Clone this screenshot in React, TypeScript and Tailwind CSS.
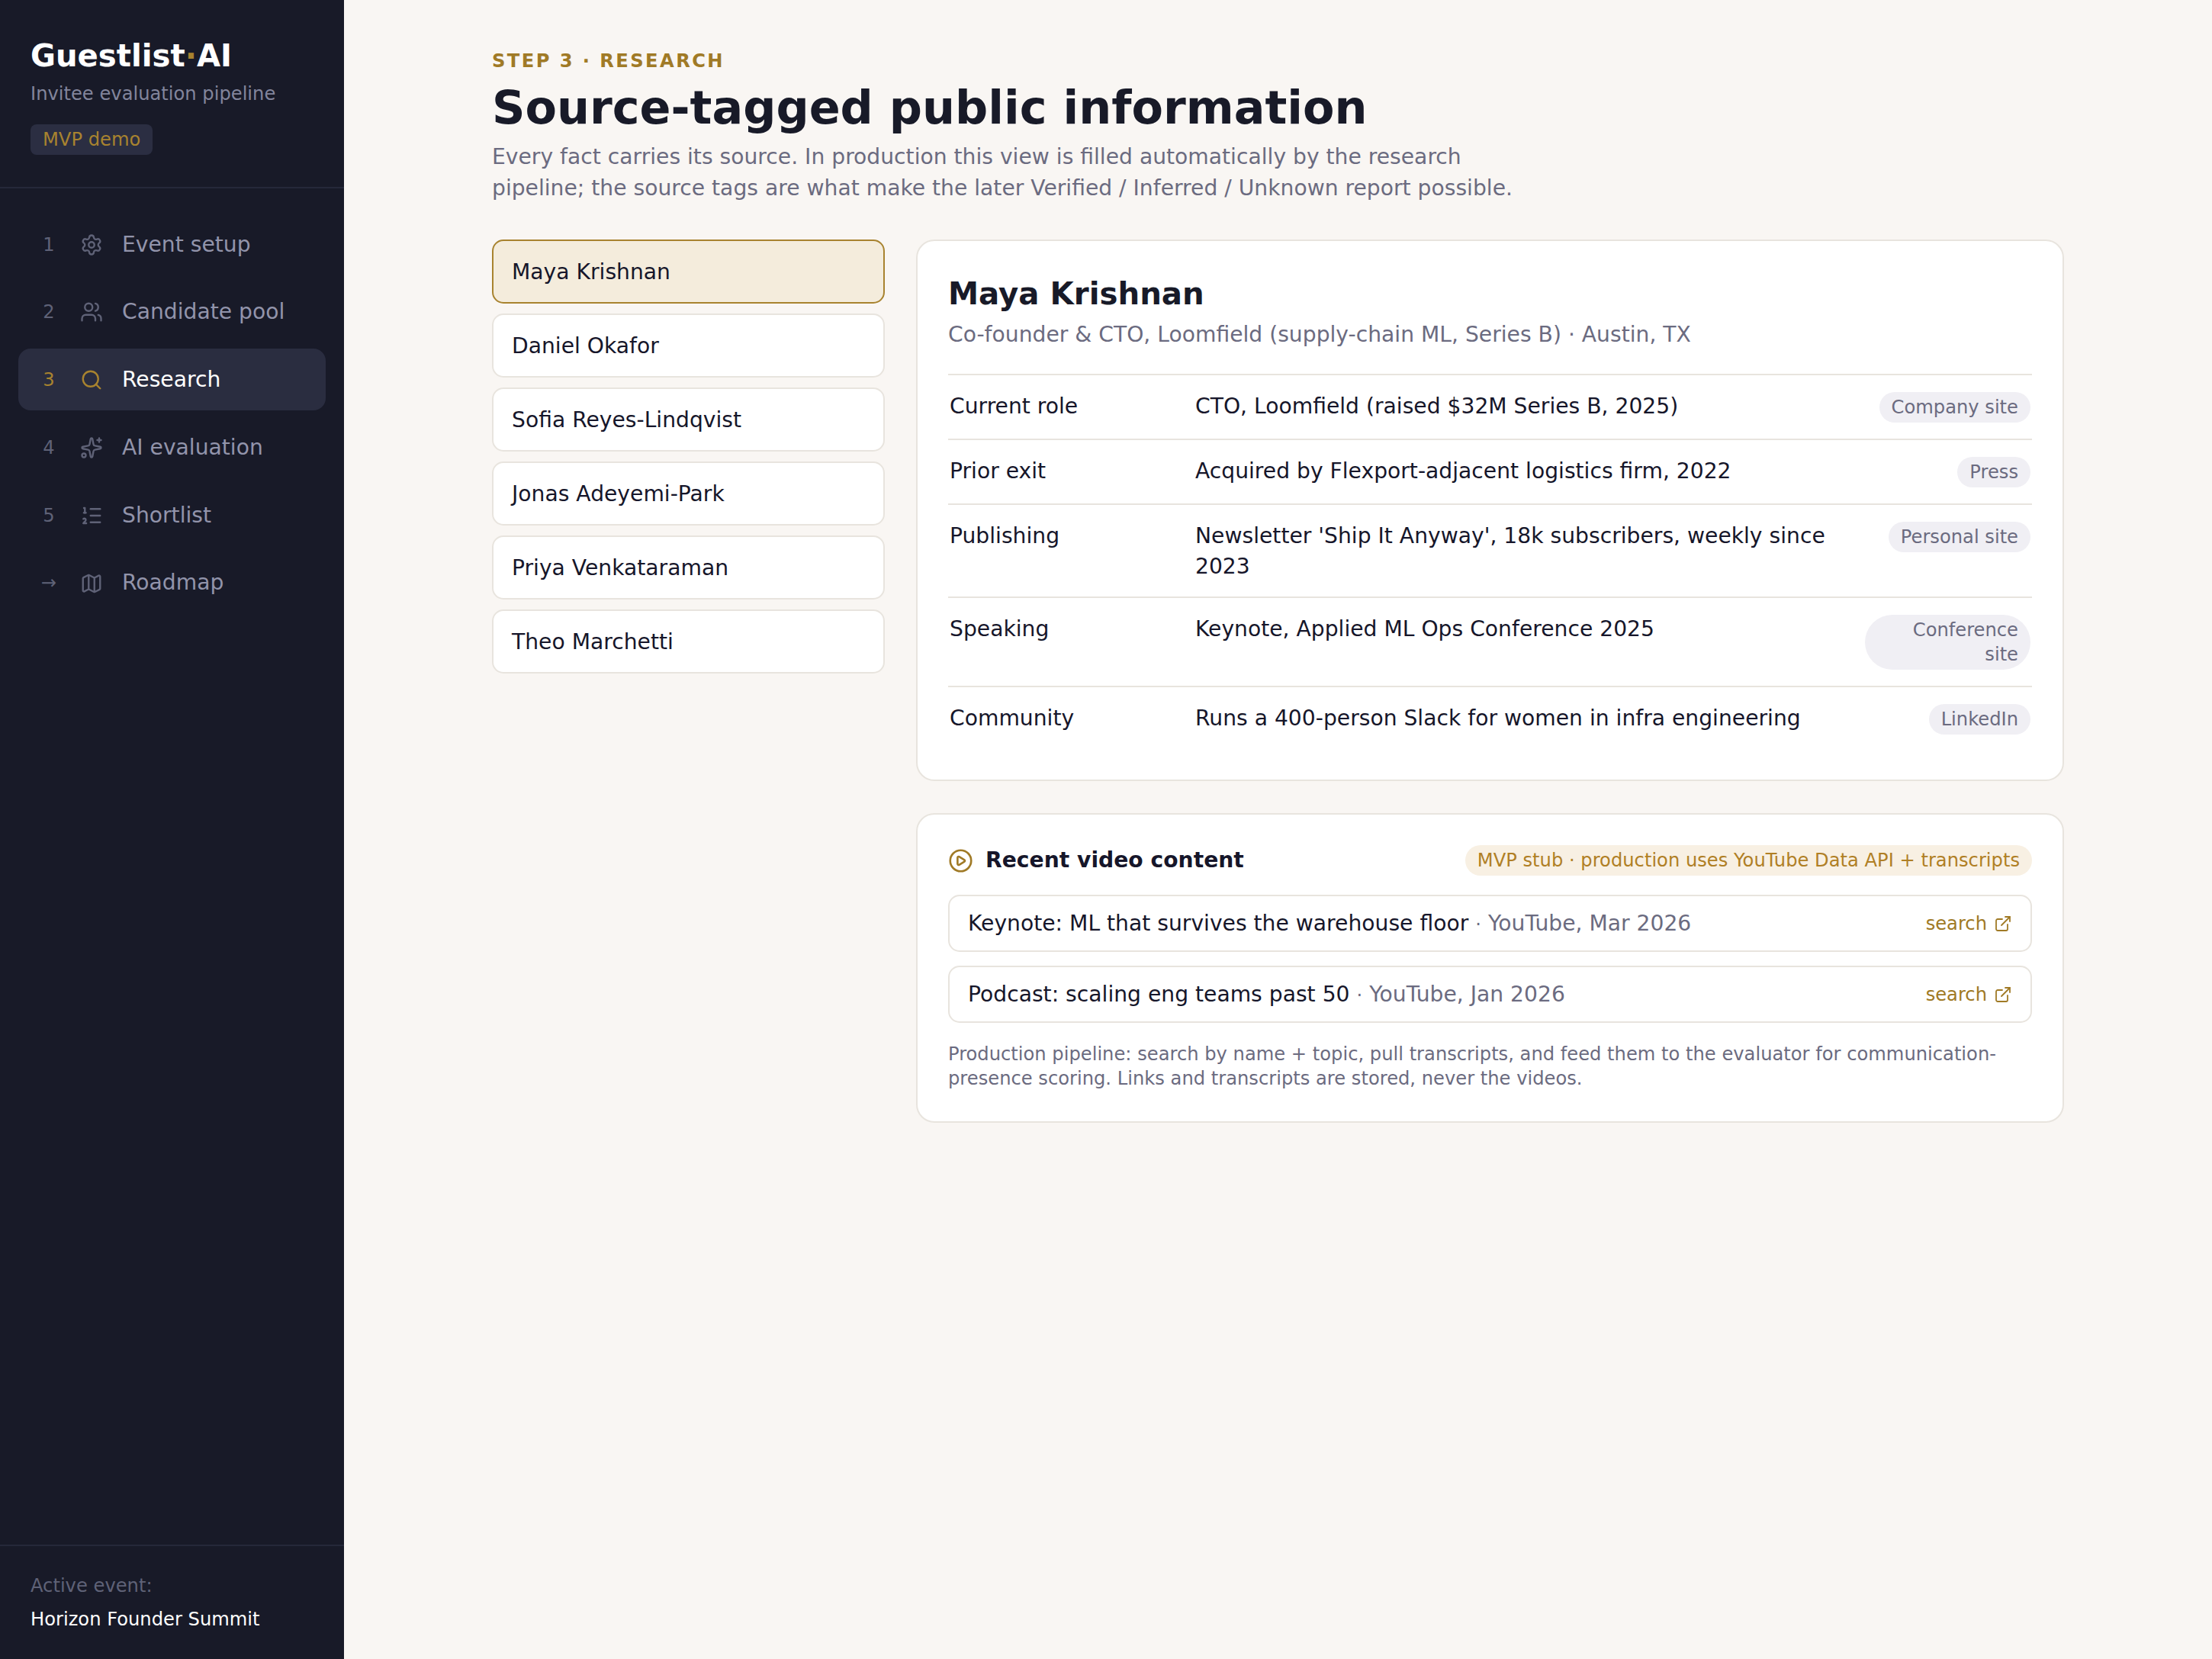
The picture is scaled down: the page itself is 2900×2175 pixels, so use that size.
import { Settings, Users, Search, Sparkles, ListOrdered, Map, CirclePlay, ExternalLink } from "lucide-react";

const nav = [
  { n: "1", label: "Event setup", icon: Settings },
  { n: "2", label: "Candidate pool", icon: Users },
  { n: "3", label: "Research", icon: Search, active: true },
  { n: "4", label: "AI evaluation", icon: Sparkles },
  { n: "5", label: "Shortlist", icon: ListOrdered },
  { n: "→", label: "Roadmap", icon: Map },
];

const people = ["Maya Krishnan", "Daniel Okafor", "Sofia Reyes-Lindqvist", "Jonas Adeyemi-Park", "Priya Venkataraman", "Theo Marchetti"];

const facts = [
  { label: "Current role", value: "CTO, Loomfield (raised $32M Series B, 2025)", tag: "Company site" },
  { label: "Prior exit", value: "Acquired by Flexport-adjacent logistics firm, 2022", tag: "Press" },
  { label: "Publishing", value: "Newsletter 'Ship It Anyway', 18k subscribers, weekly since 2023", tag: "Personal site" },
  { label: "Speaking", value: "Keynote, Applied ML Ops Conference 2025", tag: "Conference site" },
  { label: "Community", value: "Runs a 400-person Slack for women in infra engineering", tag: "LinkedIn" },
];

const videos = [
  { title: "Keynote: ML that survives the warehouse floor", meta: "YouTube, Mar 2026" },
  { title: "Podcast: scaling eng teams past 50", meta: "YouTube, Jan 2026" },
];

const App = () => {
  return (
    <div className="flex min-h-[2175px] bg-[#f9f6f3] font-['DejaVu_Sans',sans-serif] text-[28.2px] text-[#16162a]">
      <aside className="flex w-[451px] shrink-0 flex-col bg-[#181a28]">
        <div className="flex flex-col items-start border-b-2 border-[#25283a] px-[40px] pt-[47px] pb-[42px]">
          <h1 className="text-[40.2px] leading-[52px] font-bold text-white">
            Guestlist<span className="text-[#a8832f]">·</span>AI
          </h1>
          <p className="mt-[6px] text-[24.2px] leading-[36px] text-[#82859c]">Invitee evaluation pipeline</p>
          <span className="mt-[22px] rounded-[8px] bg-[#2b2e42] px-[16px] py-[3px] text-[24.2px] leading-[34px] text-[#a8832f]">MVP demo</span>
        </div>
        <nav className="flex flex-col gap-[7.4px] px-[24px] pt-[32px]">
          {nav.map((item) => (
            <div
              key={item.label}
              className={`flex h-[81.4px] items-center rounded-[16px] px-[28px] pt-[2px] ${item.active ? "bg-[#2a2d40] text-white" : "text-[#9294ab]"}`}
            >
              <span className={`w-[24px] text-center text-[24.2px] ${item.active ? "text-[#a8832f]" : "text-[#5f6277]"}`}>{item.n}</span>
              <item.icon className={`mr-[25px] ml-[29px] size-[30px] stroke-[1.9] ${item.active ? "text-[#a8832f]" : "text-[#5f6277]"}`} />
              <span>{item.label}</span>
            </div>
          ))}
        </nav>
        <div className="mt-auto border-t-2 border-[#25283a] px-[40px] pt-[32px] pb-[32px]">
          <p className="text-[24.2px] leading-[40px] text-[#5f6277]">Active event:</p>
          <p className="mt-[4px] text-[24.2px] leading-[40px] text-white">Horizon Founder Summit</p>
        </div>
      </aside>

      <main className="flex-1 pt-[64px] pr-[194px] pl-[194px]">
        <p className="text-[24.2px] leading-[32px] font-bold tracking-[0.1em] text-[#a07a26]">STEP 3 · RESEARCH</p>
        <h2 className="mt-[8px] text-[60.4px] leading-[74px] font-bold text-[#181a28]">Source-tagged public information</h2>
        <p className="mt-[8px] max-w-[1370px] leading-[40.7px] text-[#6b6b80]">
          Every fact carries its source. In production this view is filled automatically by the research pipeline; the source tags are what make the later Verified / Inferred / Unknown report possible.
        </p>

        <div className="mt-[47px] flex items-start gap-[41px]">
          <ul className="flex w-[515px] shrink-0 flex-col gap-[13px]">
            {people.map((name, i) => (
              <li
                key={name}
                className={`flex h-[84px] items-center rounded-[15px] border-2 px-[24px] pt-[2px] ${i === 0 ? "border-[#a8832f] bg-[#f4ecdc]" : "border-[#e8e4de] bg-white"}`}
              >
                {name}
              </li>
            ))}
          </ul>

          <div className="flex min-w-0 flex-1 flex-col gap-[42px]">
            <section className="rounded-[24px] border-2 border-[#e8e4de] bg-white px-[40px] pt-[40px] pb-[38px]">
              <h3 className="mt-[3px] text-[40.3px] leading-[54px] font-bold text-[#181a28]">Maya Krishnan</h3>
              <p className="mt-[6px] leading-[40px] text-[#6b6b80]">Co-founder &amp; CTO, Loomfield (supply-chain ML, Series B) · Austin, TX</p>
              <div className="mt-[31px]">
                {facts.map((f) => (
                  <div key={f.label} className="flex items-start border-t-2 border-[#e8e4de] pt-[21px] pb-[19px] pl-[2px]">
                    <span className="w-[322px] shrink-0 leading-[40px]">{f.label}</span>
                    <span className="min-w-0 flex-1 leading-[40px]">{f.value}</span>
                    <span className="mt-[1px] mr-[2px] mb-[2px] ml-[24px] max-w-[217px] shrink-0 rounded-full bg-[#f0eff4] px-[16px] py-[4px] text-right text-[24.2px] leading-[32px] text-[#6b6b80]">{f.tag}</span>
                  </div>
                ))}
              </div>
            </section>

            <section className="rounded-[24px] border-2 border-[#e8e4de] bg-white p-[40px]">
              <div className="flex items-center">
                <CirclePlay className="mr-[16px] size-[33px] stroke-[1.9] text-[#a07a26]" />
                <h4 className="leading-[36px] font-bold text-[#16162a]">Recent video content</h4>
                <span className="ml-auto rounded-full bg-[#f8f0e3] px-[16px] py-[2px] text-[24.2px] leading-[36px] text-[#b07f25]">MVP stub · production uses YouTube Data API + transcripts</span>
              </div>
              <div className="mt-[25px] flex flex-col gap-[17.7px]">
                {videos.map((v) => (
                  <div key={v.title} className="flex h-[75px] items-center justify-between rounded-[15px] border-2 border-[#e8e4de] px-[24px] pt-[1px]">
                    <p>
                      {v.title} <span className="text-[#6b6b80]"><span className="text-[24.2px]">·</span> {v.meta}</span>
                    </p>
                    <a className="flex items-center gap-[9px] text-[24.2px] text-[#a07a26]">
                      search
                      <ExternalLink className="size-[24px] stroke-[1.8]" />
                    </a>
                  </div>
                ))}
              </div>
              <p className="mt-[25px] text-[24.2px] leading-[32px] text-[#6b6b80]">
                Production pipeline: search by name + topic, pull transcripts, and feed them to the evaluator for communication-presence scoring. Links and transcripts are stored, never the videos.
              </p>
            </section>
          </div>
        </div>
      </main>
    </div>
  );
};

export default App;
